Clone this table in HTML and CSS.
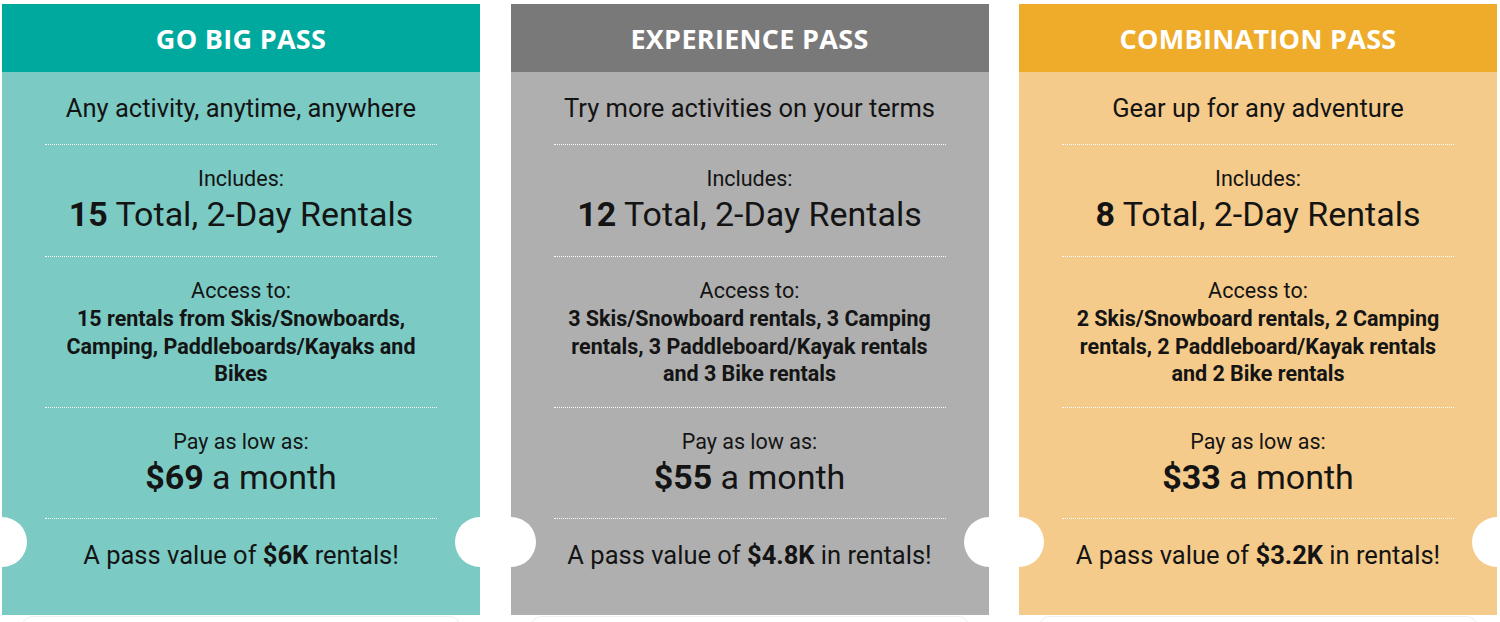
FILE: index.html
```html
<!DOCTYPE html>
<html lang="en">
<head>
<meta charset="utf-8">
<title>Passes</title>
<link rel="stylesheet" href="styles.css">
</head>
<body>
<main class="passes">
  <div class="col">
    <article class="card card-teal">
      <header class="card-head">GO BIG PASS</header>
      <section class="sec sec-tag">Any activity, anytime, anywhere</section>
      <section class="sec sec-inc">
        <div class="label">Includes:</div>
        <div class="big"><b>15</b> Total, 2-Day Rentals</div>
      </section>
      <section class="sec sec-acc">
        <div class="label">Access to:</div>
        <div class="list">15 rentals from Skis/Snowboards, Camping, Paddleboards/Kayaks and Bikes</div>
      </section>
      <section class="sec sec-pay">
        <div class="label">Pay as low as:</div>
        <div class="big"><b>$69</b> a month</div>
      </section>
      <section class="sec sec-val">A pass value of <b>$6K</b> rentals!</section>
    </article>
    <div class="card-foot"></div>
  </div>
  <div class="col">
    <article class="card card-gray">
      <header class="card-head">EXPERIENCE PASS</header>
      <section class="sec sec-tag">Try more activities on your terms</section>
      <section class="sec sec-inc">
        <div class="label">Includes:</div>
        <div class="big"><b>12</b> Total, 2-Day Rentals</div>
      </section>
      <section class="sec sec-acc">
        <div class="label">Access to:</div>
        <div class="list">3 Skis/Snowboard rentals, 3 Camping rentals, 3 Paddleboard/Kayak rentals and 3 Bike rentals</div>
      </section>
      <section class="sec sec-pay">
        <div class="label">Pay as low as:</div>
        <div class="big"><b>$55</b> a month</div>
      </section>
      <section class="sec sec-val">A pass value of <b>$4.8K</b> in rentals!</section>
    </article>
    <div class="card-foot"></div>
  </div>
  <div class="col">
    <article class="card card-orange">
      <header class="card-head">COMBINATION PASS</header>
      <section class="sec sec-tag">Gear up for any adventure</section>
      <section class="sec sec-inc">
        <div class="label">Includes:</div>
        <div class="big"><b>8</b> Total, 2-Day Rentals</div>
      </section>
      <section class="sec sec-acc">
        <div class="label">Access to:</div>
        <div class="list">2 Skis/Snowboard rentals, 2 Camping rentals, 2 Paddleboard/Kayak rentals and 2 Bike rentals</div>
      </section>
      <section class="sec sec-pay">
        <div class="label">Pay as low as:</div>
        <div class="big"><b>$33</b> a month</div>
      </section>
      <section class="sec sec-val">A pass value of <b>$3.2K</b> in rentals!</section>
    </article>
    <div class="card-foot"></div>
  </div>
</main>
</body>
</html>
```

FILE: styles.css
```css
html, body {
  margin: 0;
  padding: 0;
  background: #ffffff;
  overflow: hidden;
}

.passes {
  display: grid;
  grid-template-columns: 478px 478px 478px;
  column-gap: 30.5px;
  padding: 4px 0 0 2px;
  font-family: Roboto, "Liberation Sans", sans-serif;
  color: #141414;
}

.card {
  position: relative;
  overflow: hidden;
  height: 611px;
  display: flex;
  flex-direction: column;
  text-align: center;
}

.card::before,
.card::after {
  content: "";
  position: absolute;
  top: 513px;
  width: 50px;
  height: 50px;
  border-radius: 50%;
  background: #ffffff;
}
.card::before { left: -25px; }
.card::after { right: -25px; }

.card-head {
  height: 68px;
  flex: none;
  display: flex;
  align-items: center;
  justify-content: center;
  font-family: "Open Sans", "DejaVu Sans", sans-serif;
  font-weight: 700;
  font-size: 27px;
  letter-spacing: 0.3px;
  color: #ffffff;
}

.card-teal { background: #7bcbc4; }
.card-teal .card-head { background: #00a99e; }
.card-gray { background: #afafaf; }
.card-gray .card-head { background: #797979; }
.card-orange { background: #f4cb8a; }
.card-orange .card-head { background: #eeac2a; }

.sec {
  margin: 0 43px;
  border-bottom: 1px dotted rgba(255, 255, 255, 0.95);
  flex: none;
}
.sec:last-child { border-bottom: none; }

.sec-tag {
  font-size: 25.5px;
  line-height: 28px;
  padding: 22px 0 22px;
}

.sec-inc { height: 112px; box-sizing: border-box; padding-top: 22px; }
.sec-acc { height: 151px; box-sizing: border-box; padding-top: 20px; }
.sec-pay { height: 111px; box-sizing: border-box; padding-top: 22px; }

.label {
  font-size: 21.5px;
  line-height: 24px;
}
.sec-acc .label { line-height: 28px; }

.big {
  font-size: 34px;
  line-height: 46px;
}
.big b { font-weight: 700; }

.list {
  font-size: 21.5px;
  font-weight: 700;
  line-height: 27.5px;
  padding: 0 4px;
}

.sec-val {
  font-size: 25.5px;
  line-height: 28px;
  padding-top: 22px;
}

.card-foot {
  height: 12px;
  margin: 1px 20px 0;
  border: 1px solid #f0f0f0;
  border-bottom: none;
  border-radius: 10px 10px 0 0;
}
```
